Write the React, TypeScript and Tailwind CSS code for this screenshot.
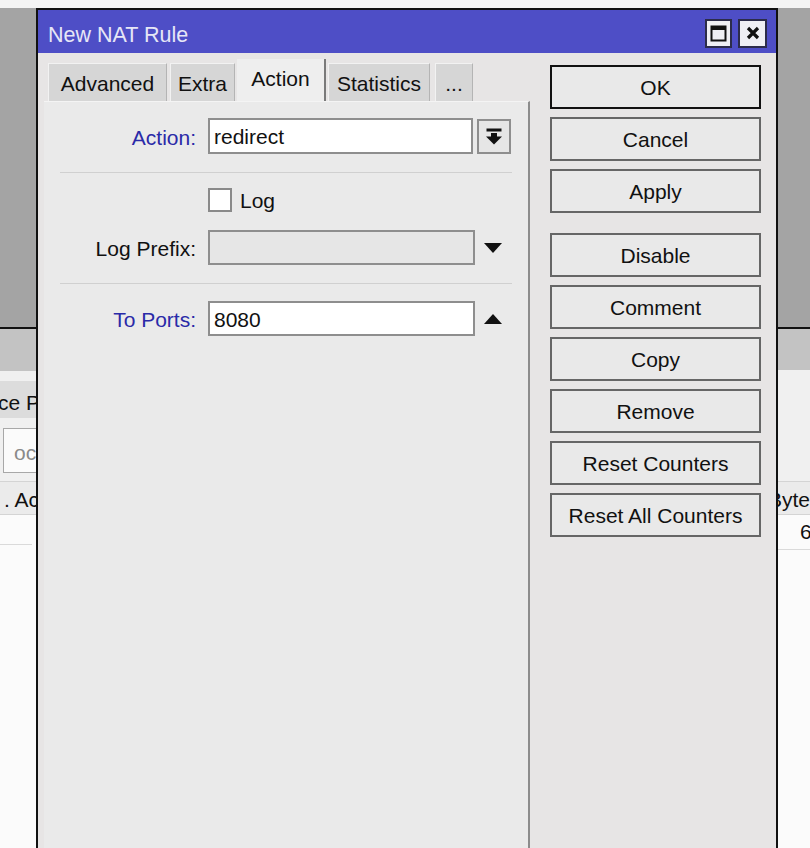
const FONT = "font-['Liberation_Sans',Arial,sans-serif]"

const TABS = [
  { label: 'Advanced', cls: 'w-[119px]', ml: 'ml-0' },
  { label: 'Extra', cls: 'w-[65px]', ml: 'ml-[3px]' },
  { label: 'Action', cls: 'w-[89px]', ml: 'ml-[2px]', active: true },
  { label: 'Statistics', cls: 'w-[102px]', ml: 'ml-[2px]' },
  { label: '...', cls: 'w-[38px]', ml: 'ml-[5px]' },
]

const BUTTONS = ['OK', 'Cancel', 'Apply', 'Disable', 'Comment', 'Copy', 'Remove', 'Reset Counters', 'Reset All Counters']

function DropIcon() {
  return (
    <svg width="18" height="17" viewBox="0 0 18 17">
      <rect x="1.5" y="0.5" width="15" height="3" fill="#111" />
      <rect x="6" y="5" width="6" height="4" fill="#111" />
      <path d="M1 8.5 H17 L9 16.5 Z" fill="#111" />
    </svg>
  )
}

function Triangle({ up }: { up?: boolean }) {
  return (
    <svg width="18" height="10" viewBox="0 0 18 10">
      <path d={up ? 'M0 10 H18 L9 0 Z' : 'M0 0 H18 L9 10 Z'} fill="#111" />
    </svg>
  )
}

export default function App() {
  return (
    <div className={`w-[810px] h-[848px] overflow-hidden bg-[#f4f4f4] flex flex-col ${FONT} text-[21px] text-[#111]`}>
      <div className="h-[8px] shrink-0" />
      <div className="flex flex-1 min-h-0">
        {/* window behind, left edge */}
        <div className="w-[36px] flex flex-col overflow-hidden">
          <div className="h-[321px] bg-[#a4a4a4] border-b-2 border-[#111] shrink-0" />
          <div className="h-[42px] bg-[#c3c3c3] shrink-0" />
          <div className="flex-1 bg-[#f0f0f0] flex flex-col">
            <div className="mt-[10px] h-[37px] bg-[#dcdcdc] flex items-center pt-[6px] whitespace-nowrap overflow-hidden">
              <span className="-ml-[2px]">ce Pr</span>
            </div>
            <div className="mt-[10px] h-[45px] ml-[3px] bg-[#fbfbfb] border border-r-0 border-[#a8a8a8] flex items-center pt-[4px] overflow-hidden whitespace-nowrap">
              <span className="pl-[10px] text-[#8a8a8a]">oc</span>
            </div>
            <div className="mt-[8px] h-[34px] bg-[#ebebeb] border-y border-[#d4d4d4] flex items-center pt-[3px] whitespace-nowrap overflow-hidden">
              <span className="pl-[4px]">. Ac</span>
            </div>
            <div className="flex-1 bg-[#fbfbfb]">
              <div className="h-[30px] w-[32px] border-b border-[#dadada]" />
            </div>
          </div>
        </div>

        {/* dialog */}
        <div className="w-[742px] border-2 border-b-0 border-[#111] flex flex-col bg-[#e7e5e5]">
          <div className="h-[43px] bg-[#4e4ec6] flex items-center pl-[10px] pr-[9px] shrink-0">
            <span className="text-[#e6e6f6] text-[21.5px] flex-1 pt-[7px]">New NAT Rule</span>
            <div className="mt-[3px] w-[27px] h-[29px] bg-[#efeff4] border-2 border-[#2c2c4a] flex items-center justify-center">
              <svg width="17" height="17" viewBox="0 0 17 17">
                <rect x="1.5" y="1.5" width="14" height="14" stroke="#111" strokeWidth="2" fill="none" />
                <rect x="1" y="1" width="15" height="4" fill="#111" />
              </svg>
            </div>
            <div className="mt-[3px] ml-[6px] w-[29px] h-[29px] bg-[#efeff4] border-2 border-[#2c2c4a] flex items-center justify-center">
              <svg width="14" height="14" viewBox="0 0 14 14">
                <path d="M2 2 L12 12 M12 2 L2 12" stroke="#111" strokeWidth="3.2" />
              </svg>
            </div>
          </div>

          <div className="flex flex-1">
            {/* tabs + panel */}
            <div className="w-[492px] flex flex-col">
              <div className="h-[48px] flex items-end pl-[10px]">
                {TABS.map(t => (
                  <div
                    key={t.label}
                    className={`${t.cls} ${t.ml} flex items-center justify-center ${
                      t.active
                        ? 'h-[42px] bg-[#eeeeee] border-r-2 border-[#7a7a7a] pb-[2px]'
                        : 'h-[38px] bg-[#d6d6d6] border-l border-t border-[#f2f2f2] border-r border-r-[#b4b4b4] pt-[2px]'
                    }`}
                  >
                    {t.label}
                  </div>
                ))}
              </div>

              <div className="ml-[6px] flex-1 bg-[#eaeaea] border-r-2 border-[#8c8c8c] border-t border-t-[#f4f4f4] flex flex-col">
                <div className="mt-[16px] h-[36px] flex items-center">
                  <span className="w-[152px] text-right text-[#2a2aa8] pt-[3px]">Action:</span>
                  <div className="ml-[12px] w-[265px] h-[36px] bg-white border-2 border-[#8e8e8e] flex items-center pl-[4px] pt-[2px]">redirect</div>
                  <div className="ml-[4px] w-[34px] h-[35px] bg-[#e6e6e6] border-2 border-[#8e8e8e] flex items-center justify-center">
                    <DropIcon />
                  </div>
                </div>

                <div className="mt-[18px] ml-[16px] w-[452px] border-t border-[#d0d0d0]" />

                <div className="mt-[15px] h-[24px] flex items-center">
                  <div className="ml-[164px] w-[24px] h-[24px] bg-white border-2 border-[#8a8a8a]" />
                  <span className="ml-[8px] pt-[2px]">Log</span>
                </div>

                <div className="mt-[18px] h-[35px] flex items-center">
                  <span className="w-[152px] text-right pt-[3px]">Log Prefix:</span>
                  <div className="ml-[12px] w-[267px] h-[35px] bg-[#e6e6e6] border-2 border-[#8e8e8e]" />
                  <div className="w-[36px] flex justify-center">
                    <Triangle />
                  </div>
                </div>

                <div className="mt-[18px] ml-[16px] w-[452px] border-t border-[#d0d0d0]" />

                <div className="mt-[17px] h-[35px] flex items-center">
                  <span className="w-[152px] text-right text-[#2a2aa8] pt-[3px]">To Ports:</span>
                  <div className="ml-[12px] w-[267px] h-[35px] bg-white border-2 border-[#8e8e8e] flex items-center pl-[4px] pt-[2px]">8080</div>
                  <div className="w-[36px] flex justify-center">
                    <Triangle up />
                  </div>
                </div>
              </div>
            </div>

            {/* buttons */}
            <div className="pl-[20px] pt-[12px] flex flex-col gap-[8px]">
              {BUTTONS.map(b => (
                <div
                  key={b}
                  className={`w-[211px] h-[44px] bg-[#e9e9e9] flex items-center justify-center pt-[1px] border-2 ${
                    b === 'OK' ? 'border-[#111]' : 'border-[#666]'
                  } ${b === 'Disable' ? 'mt-[12px]' : ''}`}
                >
                  {b}
                </div>
              ))}
            </div>
          </div>
        </div>

        {/* window behind, right edge */}
        <div className="w-[32px] flex flex-col overflow-hidden">
          <div className="h-[321px] bg-[#a4a4a4] border-b-2 border-[#111] shrink-0" />
          <div className="h-[41px] bg-[#c3c3c3] shrink-0" />
          <div className="h-[111px] bg-[#f0f0f0] shrink-0" />
          <div className="h-[34px] bg-[#ebebeb] border-y border-[#d4d4d4] flex items-center pt-[3px] whitespace-nowrap overflow-hidden shrink-0">
            <span className="-ml-[10px]">Byte</span>
          </div>
          <div className="h-[35px] bg-[#fbfbfb] border-b border-[#dadada] flex items-center pl-[22px] shrink-0">6</div>
          <div className="flex-1 bg-[#fbfbfb]" />
        </div>
      </div>
    </div>
  )
}
